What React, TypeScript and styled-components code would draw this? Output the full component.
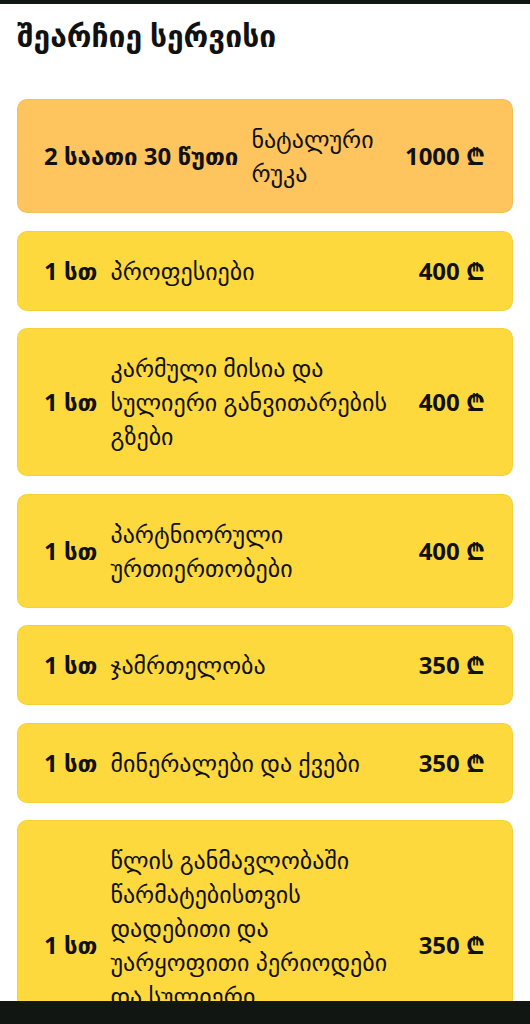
import { createGlobalStyle, styled } from "styled-components";

const GlobalStyle = createGlobalStyle`
  html, body {
    margin: 0;
    padding: 0;
    background: #ffffff;
  }
  body {
    font-family: "Noto Sans", "DejaVu Sans", sans-serif;
    color: #111111;
  }
`;

const StatusBar = styled.div`
  height: 4px;
  background: #111814;
`;

const Page = styled.main`
  padding: 0 17px 40px;
`;

const Title = styled.h1`
  margin: 0;
  padding: 13px 0 44px;
  font-size: 30px;
  line-height: 38px;
  font-weight: 700;
  color: #111111;
`;

const List = styled.div`
  display: flex;
  flex-direction: column;
  gap: 17.5px;
`;

const Card = styled.div<{ $highlight?: boolean }>`
  display: flex;
  align-items: center;
  gap: 13px;
  padding: 22px 27px 22px 26px;
  border-radius: 10px;
  border: 1px solid rgba(0, 0, 0, 0.04);
  background: ${(p) => (p.$highlight ? "#fec55e" : "#fed93e")};
  font-size: 24px;
  line-height: 34px;
`;

const Duration = styled.span`
  font-weight: 700;
  white-space: nowrap;
`;

const Name = styled.span`
  flex: 1;
  font-weight: 400;
`;

const Price = styled.span`
  font-weight: 700;
  white-space: nowrap;
  margin-left: 10px;
`;

const NavBar = styled.div`
  position: fixed;
  left: 0;
  right: 0;
  top: 1001px;
  height: 23px;
  background: #111613;
`;

const services = [
  { duration: "2 საათი 30 წუთი", name: "ნატალური რუკა", price: "1000 ₾", highlight: true },
  { duration: "1 სთ", name: "პროფესიები", price: "400 ₾" },
  { duration: "1 სთ", name: "კარმული მისია და სულიერი განვითარების გზები", price: "400 ₾" },
  { duration: "1 სთ", name: "პარტნიორული ურთიერთობები", price: "400 ₾" },
  { duration: "1 სთ", name: "ჯამრთელობა", price: "350 ₾" },
  { duration: "1 სთ", name: "მინერალები და ქვები", price: "350 ₾" },
  {
    duration: "1 სთ",
    name: "წლის განმავლობაში წარმატებისთვის დადებითი და უარყოფითი პერიოდები და სულიერი განვითარების გზები",
    price: "350 ₾",
  },
];

const App = () => {
  return (
    <>
      <GlobalStyle />
      <StatusBar />
      <Page>
        <Title>შეარჩიე სერვისი</Title>
        <List>
          {services.map((s, i) => (
            <Card key={i} $highlight={s.highlight}>
              <Duration>{s.duration}</Duration>
              <Name>{s.name}</Name>
              <Price>{s.price}</Price>
            </Card>
          ))}
        </List>
      </Page>
      <NavBar />
    </>
  );
};

export default App;
